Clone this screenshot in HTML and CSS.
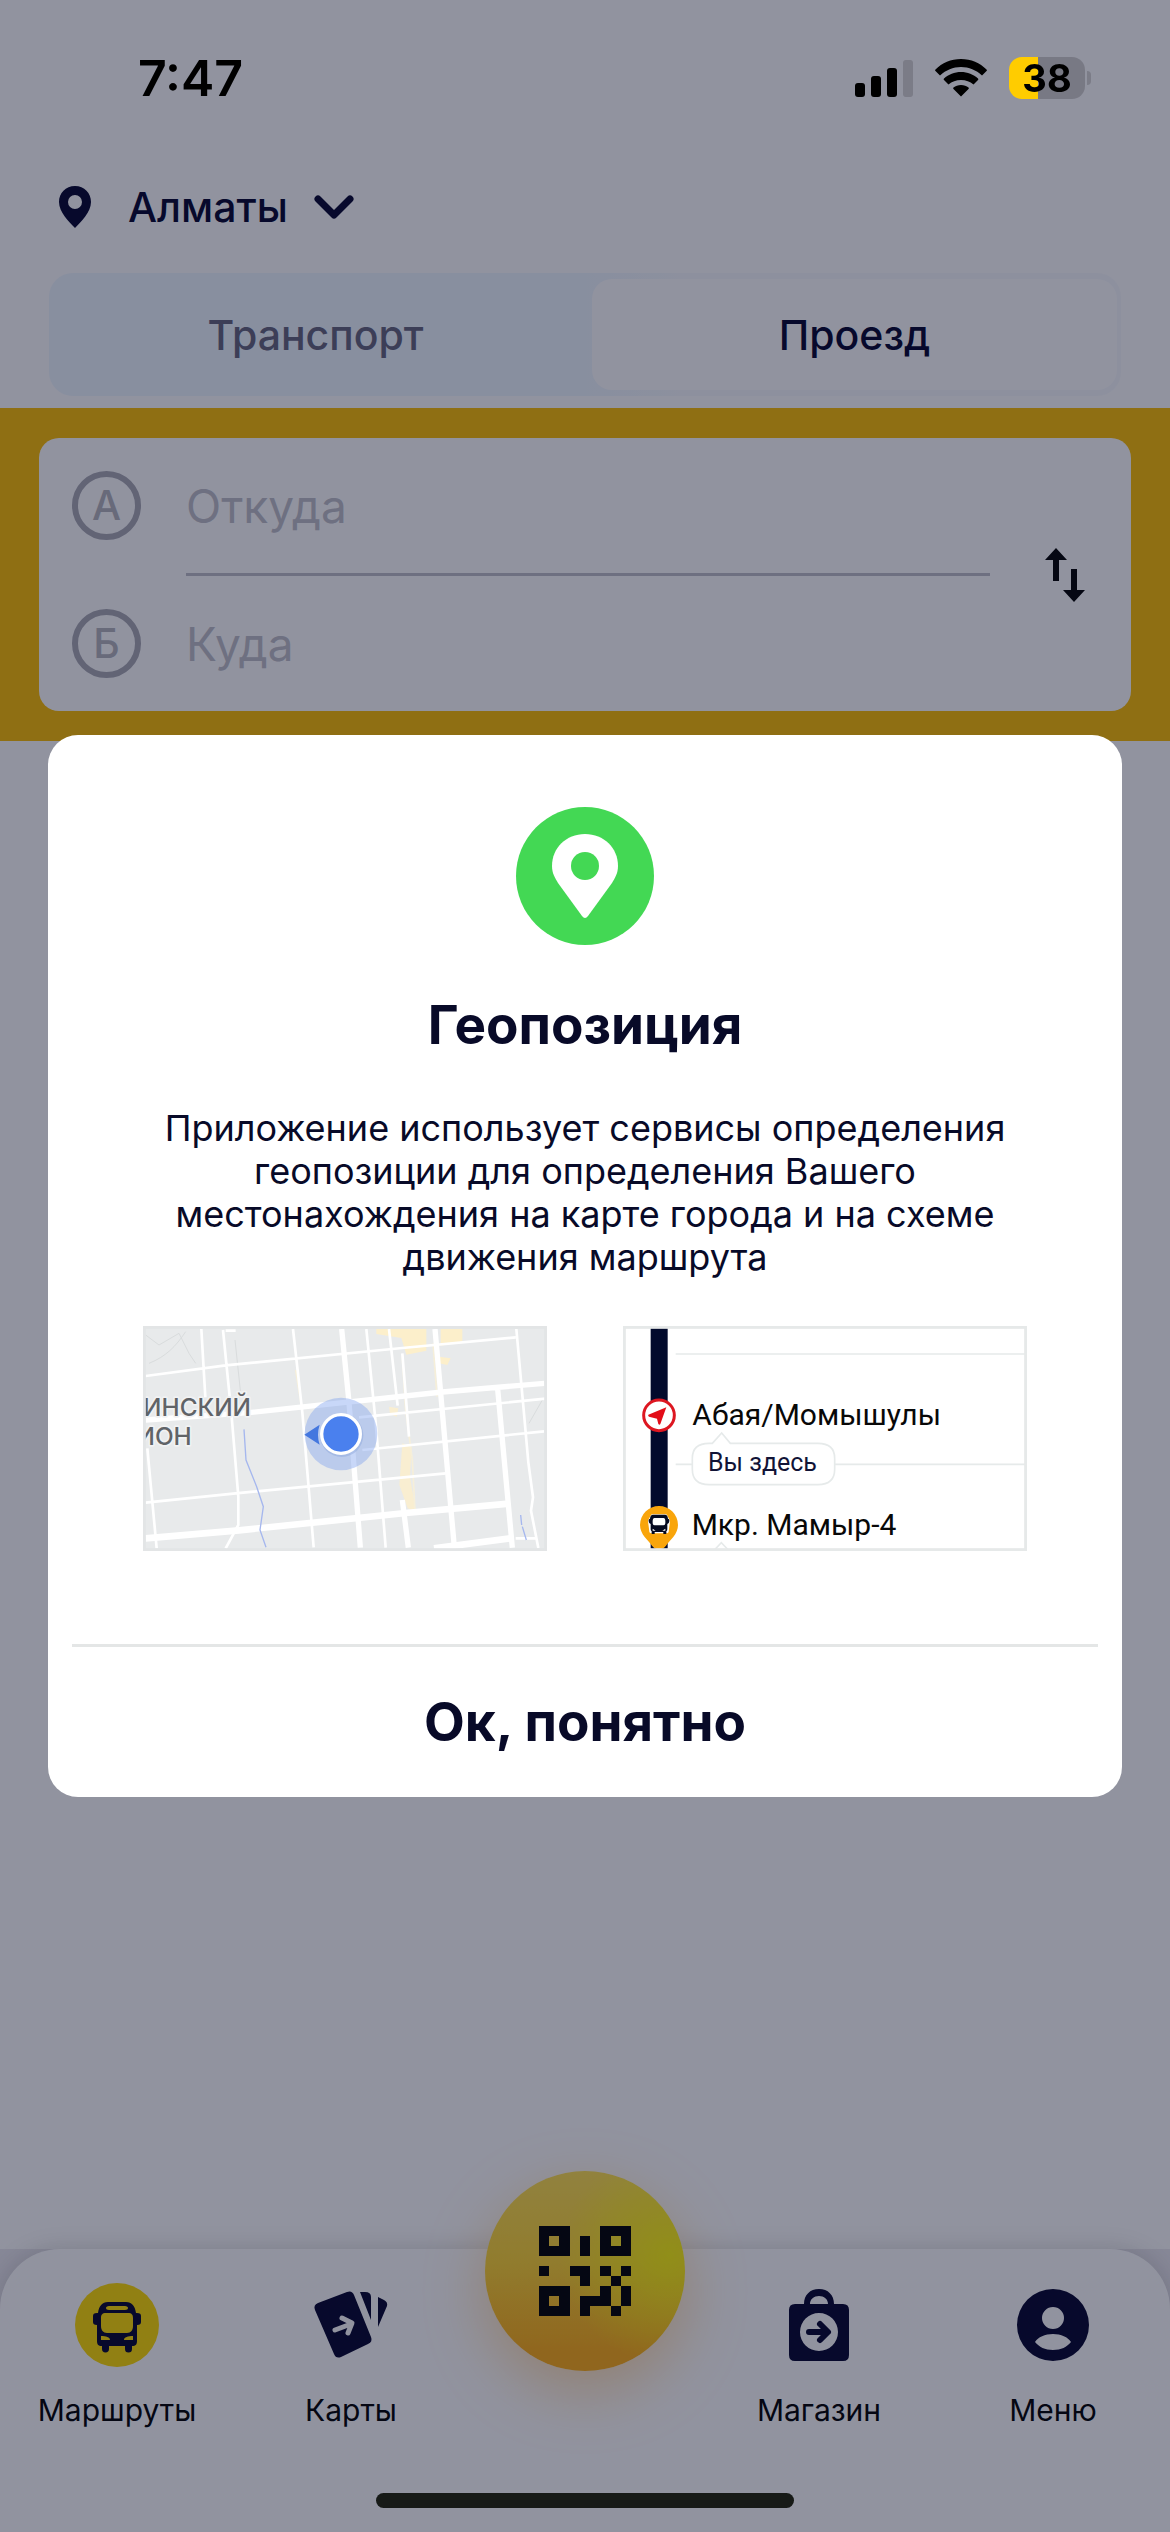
FILE: index.html
```html
<!DOCTYPE html>
<html lang="ru">
<head>
<meta charset="utf-8">
<meta name="viewport" content="width=device-width, initial-scale=1">
<title>Проезд</title>
<link rel="stylesheet" href="styles.css">
</head>
<body>
<div class="screen">
  <div class="status">
    <span class="status-time">7:47</span>
    <div class="status-icons">
      <svg width="58" height="37" viewBox="0 0 58 37" aria-hidden="true">
        <rect x="0" y="23" width="10" height="14" rx="3"/>
        <rect x="16" y="16" width="10" height="21" rx="3"/>
        <rect x="32" y="8" width="10" height="29" rx="3"/>
        <rect x="48" y="0" width="10" height="37" rx="3" fill="#7b7c87"/>
      </svg>
      <svg width="52" height="38" viewBox="0 0 52 38" aria-hidden="true">
        <path d="M26 0C36 0 45 4 51.500 10.500a1 1 0 0 1 0 1.500L47 16.500C41 11 34 8 26 8S11 11 5 16.500L.5 12a1 1 0 0 1 0-1.500C7 4 16 0 26 0z"/>
        <path d="M26 13c6.500 0 12.500 2.500 17 6.500a1 1 0 0 1 0 1.500l-4.500 4.500C35 22.500 31 21 26 21s-9 1.500-12.500 4.500L9 21a1 1 0 0 1 0-1.500C13.500 15.500 19.500 13 26 13z"/>
        <path d="M26 26c3 0 5.500 1 7.500 2.500a1 1 0 0 1 0 1.500L26 37.500 18.500 30a1 1 0 0 1 0-1.500C20.500 27 23 26 26 26z"/>
      </svg>
      <span class="battery"><span class="battery-body">38</span><span class="battery-tip"></span></span>
    </div>
  </div>

  <header class="city-row">
    <button class="city" type="button">
      <svg width="34" height="42" viewBox="0 0 34 42" aria-hidden="true"><path fill="currentColor" fill-rule="evenodd" d="M17 0C7.600 0 1 7 1 16c0 10 10 20 16 26 6-6 16-16 16-26C33 7 26.400 0 17 0zm0 9a7 7 0 1 1 0 14 7 7 0 0 1 0-14z"/></svg>
      <span class="city-name">Алматы</span>
      <svg width="40" height="24" viewBox="0 0 40 24" fill="none" stroke="currentColor" stroke-width="7" stroke-linecap="round" stroke-linejoin="round" aria-hidden="true"><path d="M4 4l16 16L36 4"/></svg>
    </button>
  </header>

  <div class="tabs" role="tablist">
    <button class="tab" type="button" role="tab" aria-selected="false">Транспорт</button>
    <button class="tab tab-active" type="button" role="tab" aria-selected="true">Проезд</button>
  </div>

  <form class="route">
    <div class="route-card">
      <div class="fields">
        <div class="field">
          <label class="mark" for="from">А</label>
          <input class="place" id="from" type="text" placeholder="Откуда">
        </div>
        <div class="field-line"></div>
        <div class="field">
          <label class="mark" for="to">Б</label>
          <input class="place" id="to" type="text" placeholder="Куда">
        </div>
      </div>
      <button class="swap" type="button" aria-label="Поменять местами">
        <svg width="42" height="54" viewBox="0 0 42 54" aria-hidden="true"><path d="M12 0l11 12h-8v21H9V12H1zM30 54L19 42h8V21h6v21h8z"/></svg>
      </button>
    </div>
  </form>

  <div class="nav-base">
    <nav class="nav">
      <a class="nav-item" href="#routes">
        <svg class="nav-icon" viewBox="0 0 84 84" aria-hidden="true">
          <circle cx="42" cy="42" r="42" fill="#ffdc00"/>
          <path fill="currentColor" fill-rule="evenodd" d="M33 19h18c6 0 9 4 10 11h1c3 0 4 1 4 3v6c0 2-1 3-4 3v16c0 3-1 5-5 5v3a3 3 0 0 1-7 0v-3H34v3a3 3 0 0 1-7 0v-3c-4 0-5-2-5-5V42c-3 0-4-1-4-3v-6c0-2 1-3 4-3h1c1-7 4-11 10-11zm1 4c-4 0-4 4 0 4h16c4 0 4-4 0-4zm-3 7c-4 0-5 2-5 5v8c0 4 2 7 6 7h20c4 0 6-3 6-7v-8c0-3-1-5-5-5zm-5 23v4h9c0-3-4-4-9-4zm32 0c-5 0-9 1-9 4h9z"/>
        </svg>
        <span>Маршруты</span>
      </a>
      <a class="nav-item" href="#cards">
        <svg class="nav-icon" viewBox="0 0 84 84" aria-hidden="true">
          <path fill="currentColor" d="M9 20l29-11q5-2 7 3l17 42q2 5-3 7L32 74q-5 2-7-3L6 27q-2-5 3-7zM51 9h5q6 0 6 5v23zM69 14l6 3q4 2 3 6l-9 21z"/>
          <path d="M26 47l16-6M33 35l10 5-4 10" fill="none" stroke="#fff" stroke-width="5" stroke-linecap="round" stroke-linejoin="round"/>
        </svg>
        <span>Карты</span>
      </a>
      <a class="nav-item" href="#qr" aria-label="QR">
        <span class="qr">
          <svg width="92" height="90" viewBox="0 0 9 9" preserveAspectRatio="none" shape-rendering="crispEdges" aria-hidden="true">
            <path fill-rule="evenodd" d="M0 0h3v3H0zM1 1v1h1V1zM6 0h3v3H6zM7 1v1h1V1zM0 6h3v3H0zM1 7v1h1V7zM4 1h1v2H4zM0 4h1v1H0zM3 4h2v2H4V5H3zM6 4h1v1H6zM8 4h1v1H8zM7 5h1v1H7zM6 6h1v2H5v1H4V7h2zM8 6h1v2H8zM7 8h1v1H7z"/>
          </svg>
        </span>
      </a>
      <a class="nav-item" href="#shop">
        <svg class="nav-icon" viewBox="0 0 84 84" aria-hidden="true">
          <path fill="currentColor" fill-rule="evenodd" d="M18 21h9c0-9 6-15 15-15s15 6 15 15h9q6 0 6 6v45q0 6-6 6H18q-6 0-6-6V27q0-6 6-6zm15 0h18c0-5-4-8-9-8s-9 3-9 8zm9 9a19 19 0 1 0 0 38 19 19 0 0 0 0-38z"/>
          <path d="M32 49h18M43 41l8 8-8 8" fill="none" stroke="currentColor" stroke-width="6" stroke-linecap="round" stroke-linejoin="round"/>
        </svg>
        <span>Магазин</span>
      </a>
      <a class="nav-item" href="#menu">
        <svg class="nav-icon" viewBox="0 0 84 84" aria-hidden="true">
          <path fill="currentColor" fill-rule="evenodd" d="M42 6a36 36 0 1 1 0 72 36 36 0 0 1 0-72zm0 18a11 11 0 1 0 0 22 11 11 0 0 0 0-22zm0 27c-8 0-15 3-18 8 4 5 10 8 18 8s14-3 18-8c-3-5-10-8-18-8z"/>
        </svg>
        <span>Меню</span>
      </a>
    </nav>
  </div>
</div>

<div class="overlay">
  <section class="dialog" role="dialog" aria-modal="true" aria-labelledby="dialog-title">
    <svg class="dialog-icon" viewBox="0 0 138 138" aria-hidden="true">
      <circle cx="69" cy="69" r="69" fill="#43d854"/>
      <path fill="#fff" d="M69 27c-19 0-33 14-33 32 0 7 3 12 6 17l24 33q3 4 6 0l24-33c3-5 6-10 6-17 0-18-14-32-33-32z"/>
      <circle cx="69" cy="59" r="14" fill="#43d854"/>
    </svg>
    <h1 class="dialog-title" id="dialog-title">Геопозиция</h1>
    <p class="dialog-text">Приложение использует сервисы определения геопозиции для определения Вашего местонахождения на карте города и на схеме движения маршрута</p>
    <div class="previews">
      <svg class="preview" viewBox="42 48 1212 675" role="img" aria-label="Карта города">
        <rect x="42" y="48" width="1212" height="675" fill="#e8eaeb"/>
        <g fill="#fcefcb">
          <path d="M742 57h150v65l-60 12-15-50-75-12zM935 57h65v38l-65 12zM930 140l35 5-10 20-25-5z"/>
          <path d="M780 290l28 5-5 25-20-8zM820 400l28 10-5 90 18 105-25-10-25-70z" opacity=".8"/>
        </g>
        <g fill="none" stroke="#d9dcdd" stroke-width="3">
          <path d="M50 75l40 30 60-35 30 60 20 30M60 160c50-20 80-50 110-95M318 90l18 170M1240 270l-40 70"/>
        </g>
        <g fill="none" stroke="#f6efd9" stroke-width="5"><path d="M500 180l16 100M820 140l10 160 20 150 8 155M912 100l12 160"/></g>
        <g fill="none" stroke="#fff" stroke-width="8">
          <path d="M50 198l240-32 530-52 340-32M217 57l12 205M282 60l26 260 20 240v85l-38 70M492 57l28 250 34 405M712 57l28 280 30 376M780 57l26 230M820 130l20 250M1162 57l20 220 16 180 14 105-6 40 22 112M50 578l270-28 630-60M690 322l560-56M700 420l545-56M55 415l28 300M290 62h30M1160 685h64"/>
        </g>
        <g fill="none" stroke="#fff" stroke-width="16">
          <path d="M50 330l310-22 580-62 306-26M638 57l22 220 34 436M918 57l58 655M1106 237l44 476M820 570l18 143"/>
          <path d="M50 685l280-24 500-52 310-28M915 715l230-30" stroke-width="20"/>
        </g>
        <g fill="none" stroke="#a5b7ee" stroke-width="4"><path d="M345 358l6 92 32 80 20 60-10 70 18 52M1175 615l3 30M1180 650l12 40"/></g>
        <g fill="#606367" stroke="#f1f2f3" stroke-width="10" stroke-linejoin="round" paint-order="stroke" font-family="Inter, sans-serif" font-weight="500" font-size="73" text-anchor="end">
          <text x="366" y="318">ИНСКИЙ</text>
          <text x="188" y="405">ИОН</text>
        </g>
        <circle cx="636" cy="372" r="109" fill="#7ba0ee" opacity=".42"/>
        <path d="M526 374l46-30q-10 30 0 60z" fill="#4477df"/>
        <circle cx="638" cy="376" r="65" fill="#8fa9dc" opacity=".5"/>
        <circle cx="636" cy="372" r="58" fill="#4a80ee" stroke="#fff" stroke-width="10"/>
        <rect x="46" y="52" width="1204" height="667" fill="none" stroke="#e3e5e6" stroke-width="9"/>
      </svg>
      <svg class="preview" viewBox="72 48 1212 675" role="img" aria-label="Схема движения маршрута">
        <rect x="72" y="48" width="1212" height="675" fill="#fff"/>
        <path d="M230 132h1050M230 463h1050" stroke="#e6eaea" stroke-width="5"/>
        <rect x="155" y="52" width="51" height="671" fill="#020a2c"/>
        <circle cx="180" cy="316" r="46" fill="#fff" stroke="#dd1721" stroke-width="9"/>
        <path d="M202 292l-54 22q-2 3 2 6l24 6 4 16q4 4 6 0z" fill="#e30d18"/>
        <path d="M180 588a57 57 0 0 1 57 57c0 28-24 45-36 62-9 14-33 14-42 0-12-17-36-34-36-62a57 57 0 0 1 57-57z" fill="#f9a50b"/>
        <path fill="#fff" stroke="#fff" stroke-width="10" stroke-linejoin="round" d="M160 618h40l8 15-4 32H156l-4-32z"/>
        <path fill="#050a20" fill-rule="evenodd" d="M162 614h36q8 0 9 12 5 0 4 8t-6 8v16q0 5-3 6v8h-9v-6h-26v6h-9v-8q-3-1-3-6v-16q-5 0-6-8t4-8q1-12 9-12zm4 10q-5 0-5 8v8q0 6 6 6h26q6 0 6-6v-8q0-8-5-8zm-5 32v6h9zm38 0v6h-9z"/>
        <path d="M330 400q-50 0-50 45v33q0 46 50 46h327q50 0 50-46v-33q0-45-50-45H394l-26-31-28 31z" fill="#fff" stroke="#e6eaea" stroke-width="5"/>
        <path d="M346 720l21-22 21 22" fill="#fff" stroke="#e6eaea" stroke-width="5"/>
        <g font-family="Roboto, sans-serif" fill="#080808">
          <text x="280" y="346" font-size="90">Абая/Момышулы</text>
          <text x="327" y="483" font-size="75" fill="#111336">Вы здесь</text>
          <text x="278" y="674" font-size="90">Мкр. Мамыр-4</text>
        </g>
        <rect x="76" y="52" width="1204" height="667" fill="none" stroke="#e6e9e9" stroke-width="9"/>
      </svg>
    </div>
    <button class="dialog-ok" type="button">Ок, понятно</button>
  </section>
</div>
<div class="home-indicator"></div>
</body>
</html>
```
FILE: styles.css
```css
* {
  box-sizing: border-box;
}

body {
  margin: 0;
  background: #fff;
  color: #04052e;
  font-family: Inter, "Noto Sans", sans-serif;
  font-size: 41px;
}

button,
input {
  margin: 0;
  padding: 0;
  border: 0;
  background: none;
  color: inherit;
  font: inherit;
}

svg {
  display: block;
  flex: none;
}

.screen {
  display: flex;
  flex-direction: column;
  min-height: 100vh;
}

/* Status bar stays above the dimmed layer */
.status {
  position: relative;
  z-index: 2;
  display: flex;
  align-items: center;
  justify-content: space-between;
  height: 156px;
  padding: 0 79px 0 138px;
  color: #000;
}

.status-time {
  font-size: 50px;
  font-weight: 600;
}

.status-icons {
  display: flex;
  align-items: center;
  gap: 22px;
}

.battery {
  display: flex;
  align-items: center;
  gap: 2px;
}

.battery-body {
  width: 76px;
  height: 42px;
  border-radius: 13px;
  background: linear-gradient(90deg, #ffcc00 38%, #787984 38%);
  font-size: 38px;
  font-weight: 700;
  line-height: 42px;
  text-align: center;
}

.battery-tip {
  width: 4px;
  height: 14px;
  border-radius: 0 4px 4px 0;
  background: #7b7c87;
}

.city-row {
  display: flex;
  align-items: center;
  height: 102px;
  padding: 0 58px;
}

.city {
  display: flex;
  align-items: center;
  font-weight: 500;
}

.city-name {
  margin: 0 26px 0 36px;
}

.tabs {
  display: grid;
  grid-template-columns: 1fr 1fr;
  gap: 14px;
  height: 123px;
  margin: 15px 49px 12px;
  padding: 6px 4px;
  border-radius: 24px;
  background: linear-gradient(90deg, #eff7ff 50%, #f8fafe 60%);
}

.tab {
  border-radius: 20px;
  color: #64647c;
  font-weight: 500;
}

.tab-active {
  background: #fff;
  color: #04052e;
}

.route {
  padding: 30px 39px;
  background: #fcbe01;
}

.route-card {
  display: flex;
  align-items: center;
  gap: 30px;
  padding: 33px 21px 33px 33px;
  border-radius: 20px;
  background: #fff;
}

.fields {
  flex: 1;
}

.field {
  display: flex;
  align-items: center;
  gap: 45px;
}

.mark {
  flex: none;
  width: 69px;
  height: 69px;
  border: 6px solid #a9a9b3;
  border-radius: 50%;
  color: #b4b4bc;
  font-weight: 500;
  line-height: 57px;
  text-align: center;
}

.place {
  flex: 1;
  min-width: 0;
  height: 69px;
  font-size: 46px;
}

.place::placeholder {
  color: #c0c0c8;
  opacity: 1;
}

.field-line {
  height: 3px;
  margin: 33px 0 33px 114px;
  background: #c0c0c8;
}

.swap {
  display: grid;
  place-items: center;
  width: 90px;
  height: 90px;
}

.nav-base {
  margin-top: auto;
  background: #eceaf0;
}

.nav {
  display: grid;
  grid-template-columns: repeat(5, 1fr);
  align-items: start;
  min-height: 283px;
  padding-top: 34px;
  border-radius: 60px 60px 0 0;
  background: #fff;
  box-shadow: 0 0 24px rgba(0, 0, 0, 0.16);
}

.nav-item {
  display: flex;
  flex-direction: column;
  align-items: center;
  gap: 25px;
  color: #000;
  font-size: 30px;
  line-height: 36px;
  text-decoration: none;
}

.nav-icon {
  width: 84px;
  height: 84px;
  color: #04052e;
}

.qr {
  display: grid;
  place-items: center;
  width: 200px;
  height: 200px;
  margin-top: -112px;
  border-radius: 50%;
  background:
    radial-gradient(circle at 92% 42%, rgba(255, 255, 0, 0.8), rgba(255, 250, 0, 0) 50%),
    linear-gradient(#ffe050 0%, #ffd632 45%, #feae14 90%);
  box-shadow: 0 20px 60px rgba(255, 170, 50, 0.4);
}

.overlay {
  position: fixed;
  inset: 0;
  z-index: 1;
  display: flex;
  align-items: center;
  padding: 0 48px;
  background: rgba(12, 16, 43, 0.45);
}

.dialog {
  display: flex;
  flex: 1;
  flex-direction: column;
  align-items: center;
  padding: 72px 24px 0;
  border-radius: 30px;
  background: #fff;
  color: #080a28;
}

.dialog-icon {
  width: 138px;
  height: 138px;
}

.dialog-title {
  margin: 48px 0 0;
  font-size: 53px;
  font-weight: 700;
  line-height: 64px;
}

.dialog-text {
  max-width: 880px;
  margin: 50px 0 0;
  font-size: 36px;
  line-height: 43px;
  text-align: center;
}

.previews {
  display: grid;
  grid-template-columns: 1fr 1fr;
  gap: 76px;
  align-self: stretch;
  margin: 47px 71px 93px;
}

.preview {
  width: 100%;
}

.dialog-ok {
  align-self: stretch;
  height: 153px;
  border-top: 3px solid #e4e6e6;
  font-size: 53px;
  font-weight: 700;
}

.home-indicator {
  position: fixed;
  bottom: 24px;
  left: 50%;
  z-index: 2;
  width: 418px;
  height: 15px;
  margin-left: -209px;
  border-radius: 8px;
  background: #171a17;
}
```
